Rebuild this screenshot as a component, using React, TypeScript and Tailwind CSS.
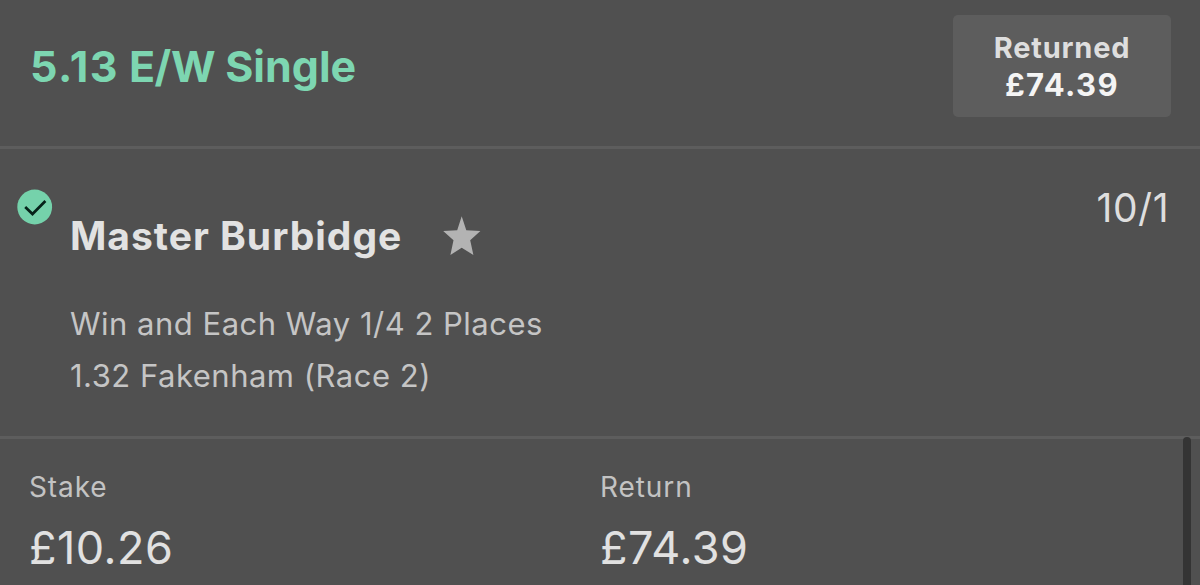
function CheckBadge() {
  return (
    <svg viewBox="0 0 36 36" className="h-9 w-9 shrink-0" aria-hidden="true">
      <circle cx="17.7" cy="18" r="17.4" fill="#75d2ab" />
      <path d="M8.2 18 L15.5 25 L28.4 12" fill="none" stroke="#06231a" strokeWidth="2.7" />
    </svg>
  );
}

function Star() {
  return (
    <svg viewBox="0 0 38 40" className="h-10 w-[38px] shrink-0" aria-hidden="true">
      <path
        d="M18.7 0.3 L23.3 14.3 L37.4 15 L27.2 24.2 L30.4 38.9 L18.7 31.7 L7.4 38.9 L10.5 24.2 L0.2 15 L14.2 14.3 Z"
        fill="#b3b3b3"
      />
    </svg>
  );
}

function Amount({ label, value }: { label: string; value: string }) {
  return (
    <div className="flex w-[571px] flex-col">
      <span className="-ml-px text-[28px] leading-8 tracking-[0.9px] text-[#c3c3c3]">{label}</span>
      <span className="mt-5 -ml-px text-[45px] leading-[50px] tracking-[0.5px] text-[#e1e1e1]">{value}</span>
    </div>
  );
}

export default function App() {
  return (
    <main className="flex h-[585px] w-[1200px] flex-col overflow-hidden bg-[#505050] font-['Inter',sans-serif] whitespace-nowrap">
      <header className="flex h-[149px] shrink-0 items-start justify-between border-b-3 border-[#5d5d5d] pt-[15px] pr-[29px] pl-[30px]">
        <h1 className="mt-[26px] text-[43px] leading-[50px] font-[650] text-[#7dd6b1]">
          <span className="tracking-[1.4px]">5.13</span> <span className="tracking-[-0.6px]">E/W</span> Single
        </h1>
        <div className="flex h-[102px] w-[218px] flex-col items-center rounded-[5px] bg-[#5d5d5d] pt-[15px] font-bold">
          <span className="text-[29px] leading-9 tracking-[0.8px] text-[#dedede]">Returned</span>
          <span className="mt-px text-[31px] leading-9 tracking-[1.4px] text-[#f4f4f4]">£74.39</span>
        </div>
      </header>

      <section className="flex h-[290px] shrink-0 items-start border-b-3 border-[#5d5d5d] pr-[31px] pl-[17px]">
        <div className="pt-10">
          <CheckBadge />
        </div>
        <div className="ml-[17px] flex flex-1 flex-col pt-[62px]">
          <div className="flex items-center">
            <h2 className="w-[373px] text-[39px] leading-[50px] font-bold tracking-[1px] text-[#e2e2e2]">Master Burbidge</h2>
            <Star />
          </div>
          <p className="mt-[37px] text-[31px] leading-[52px] tracking-[0.5px] text-[#c5c5c5]">
            Win and Each Way 1/4 2 Places
            <br />
            1.32 Fakenham (Race 2)
          </p>
        </div>
        <span className="pt-[34px] text-[39px] leading-[50px] tracking-[0.5px] text-[#dedede]">10/1</span>
      </section>

      <section className="flex min-h-0 flex-1 justify-between">
        <div className="flex pt-8 pl-[30px]">
          <Amount label="Stake" value="£10.26" />
          <Amount label="Return" value="£74.39" />
        </div>
        <div className="-mt-[2px] mr-[9px] w-2 rounded-t-full bg-[#343434]" />
      </section>
    </main>
  );
}
